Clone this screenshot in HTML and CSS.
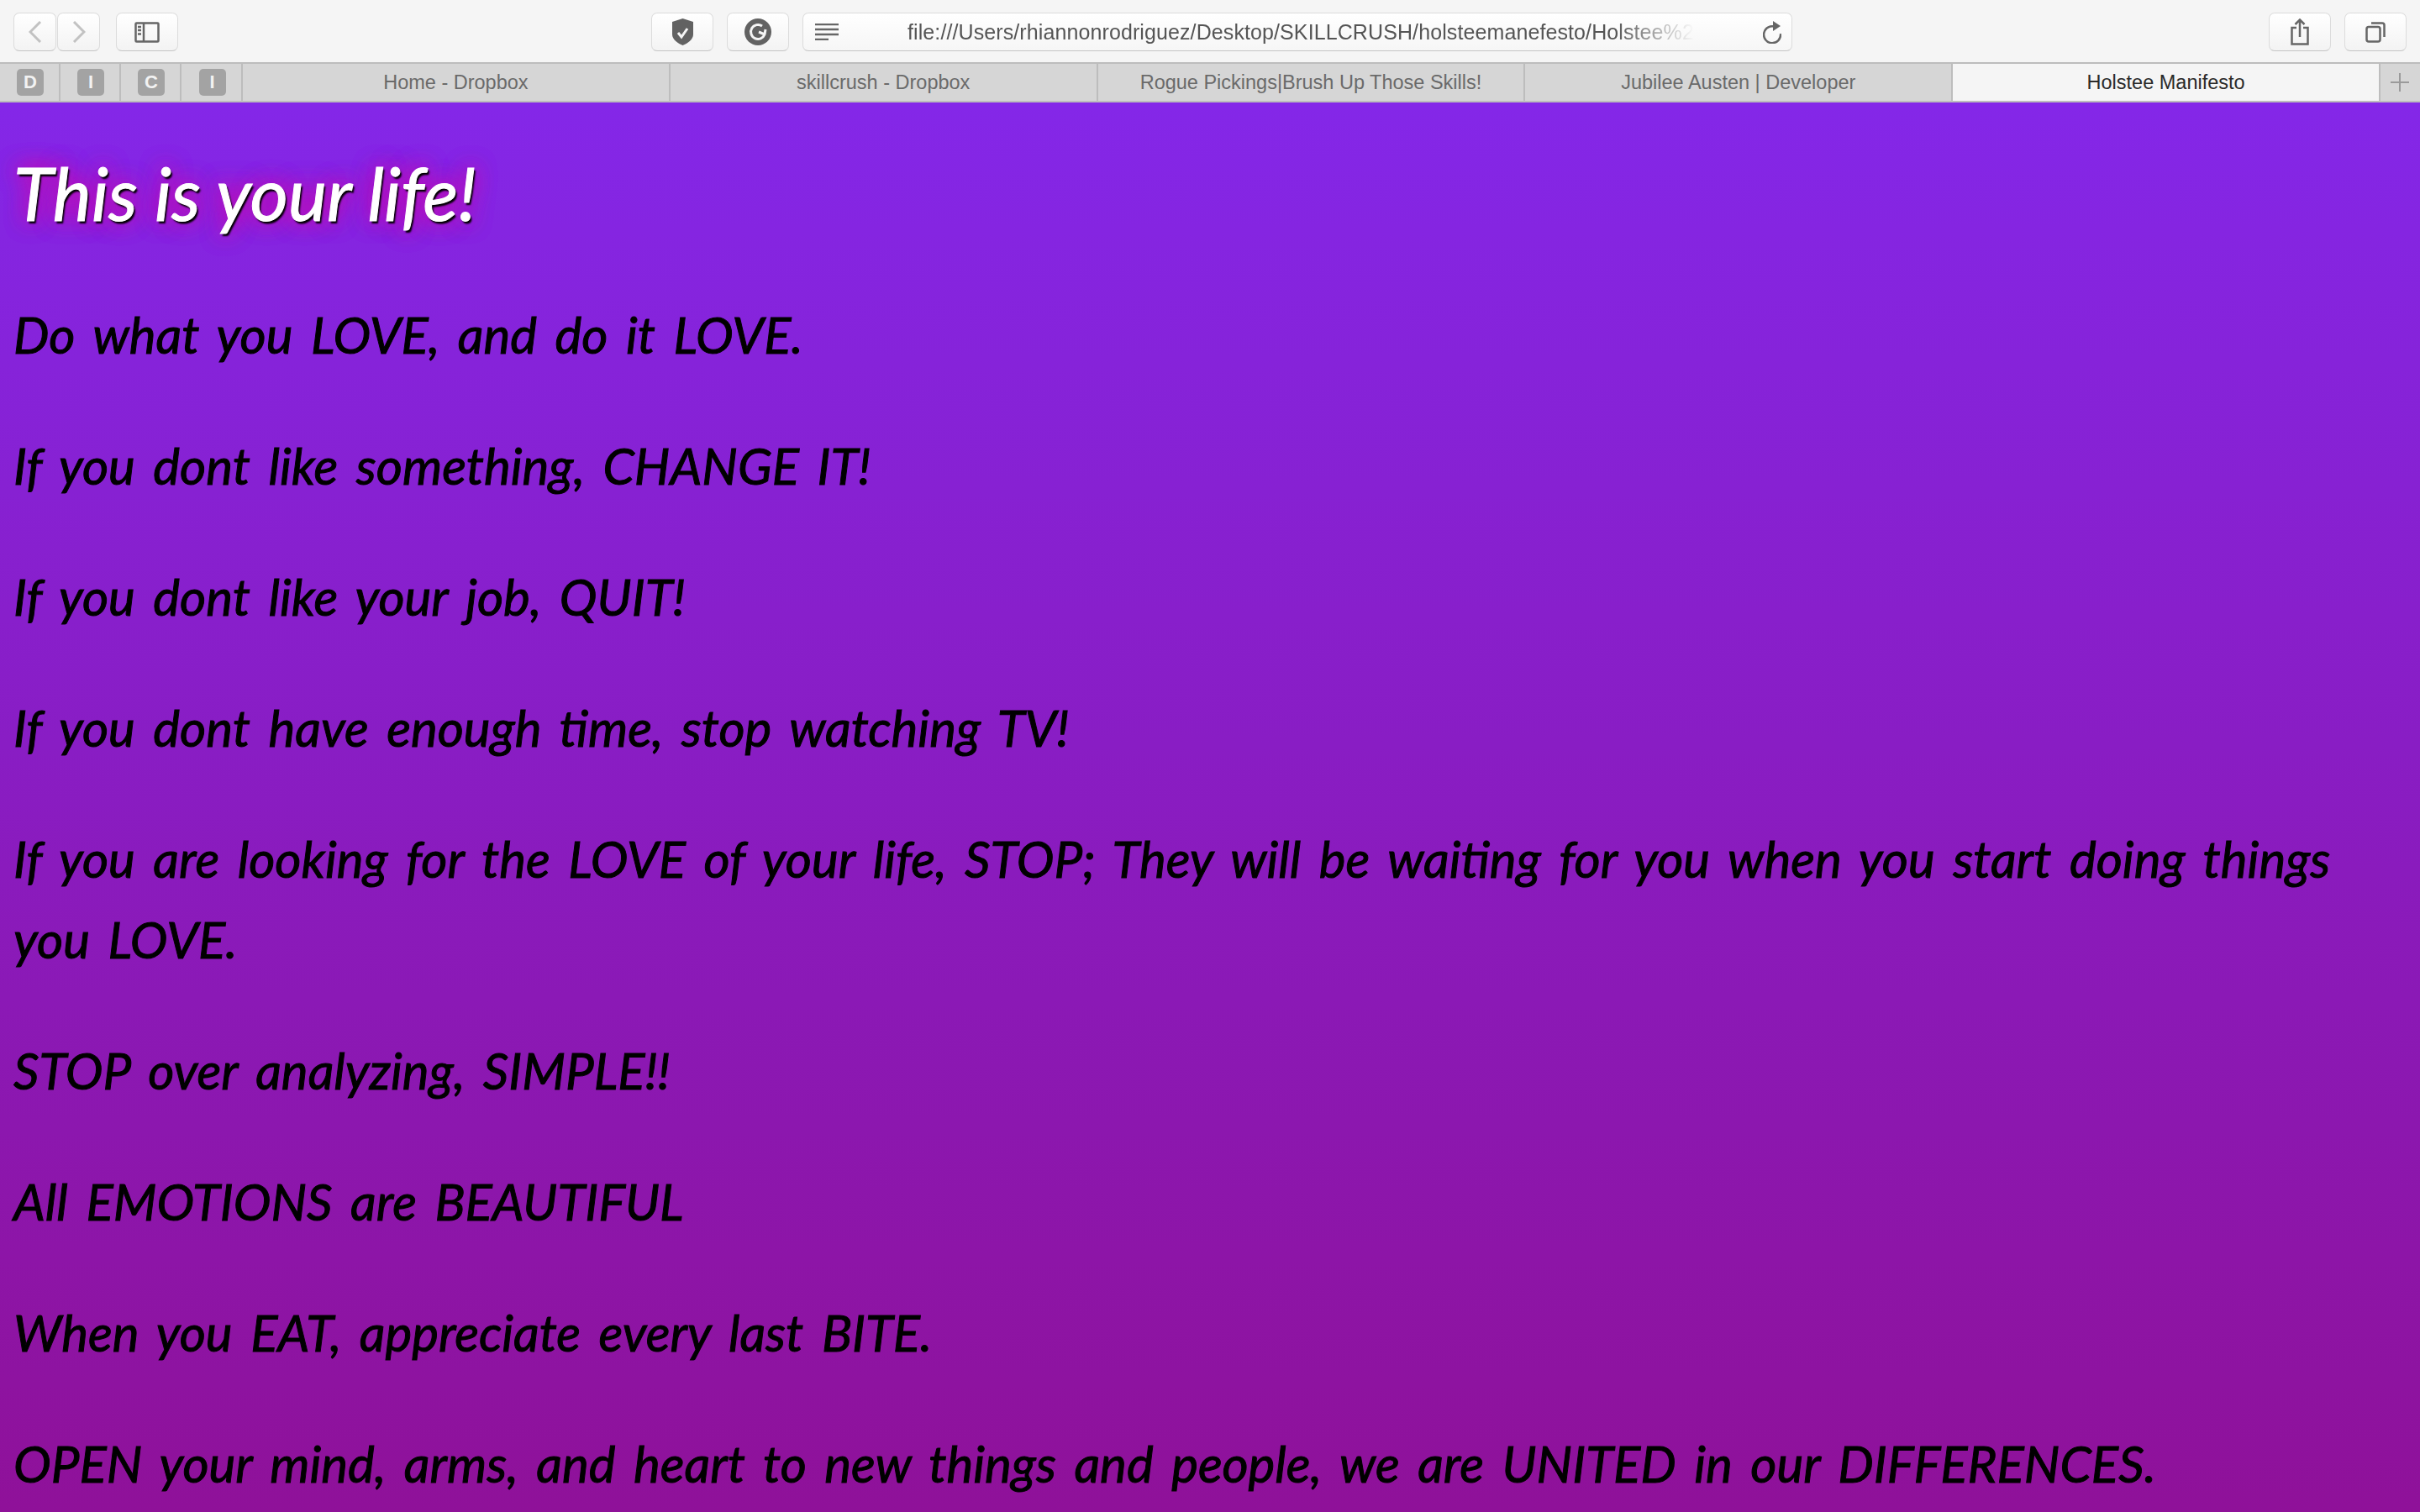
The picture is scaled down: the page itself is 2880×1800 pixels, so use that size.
FILE: index.html
```html
<!DOCTYPE html>
<html lang="en">
<head>
  <meta charset="UTF-8" />
  <title>Holstee Manifesto</title>
  <link rel="stylesheet" href="styles.css">
</head>
<body>

  <!-- Browser toolbar -->
  <header class="toolbar">
    <div class="nav-pair">
      <span class="tool-btn nav-btn"><svg width="16" height="26" viewBox="0 0 16 26"><path d="M14 1 L2 13 L14 25" class="icon-faint"/></svg></span>
      <span class="tool-btn nav-btn"><svg width="16" height="26" viewBox="0 0 16 26"><path d="M2 1 L14 13 L2 25" class="icon-faint"/></svg></span>
    </div>
    <span class="tool-btn wide-btn sidebar-btn"><svg width="30" height="25" viewBox="0 0 30 25"><rect x="1.5" y="1.5" width="27" height="22" rx="1" class="icon-line"/><path d="M11 1 V24" class="icon-line"/><path d="M4 6 H8 M4 10 H8 M4 14.5 H8" class="icon-line"/></svg></span>
    <div class="toolbar-center">
      <span class="tool-btn wide-btn"><svg width="27" height="32" viewBox="0 0 27 32"><path d="M13.5 0 L26 4 V19 C26 25 19 30 13.5 32 C8 30 1 25 1 19 V4 Z" class="icon-fill"/><path d="M8 17 L12 22 L19 12" class="icon-check"/></svg></span>
      <span class="tool-btn wide-btn"><svg width="32" height="32" viewBox="0 0 32 32"><circle cx="16" cy="16" r="16" class="icon-fill"/><path d="M21 9 A8.5 8.5 0 1 0 24 19 M24 19 L17 16 M24 19 L25 13" class="icon-check"/></svg></span>
      <div class="address-bar">
        <svg class="reader-icon" width="28" height="20" viewBox="0 0 28 20"><path d="M0 1 H28 M0 7 H28 M0 13 H28 M0 19 H16" class="icon-line"/></svg>
        <span class="url">file:///Users/rhiannonrodriguez/Desktop/SKILLCRUSH/holsteemanefesto/Holstee%2</span>
        <svg class="reload-icon" width="22" height="27" viewBox="0 0 22 27"><path d="M15 7 A10 10 0 1 0 21 15" class="icon-line"/><path d="M12 0 L21 6 L12 12 Z" class="icon-solid"/></svg>
      </div>
    </div>
    <div class="toolbar-right">
      <span class="tool-btn wide-btn"><svg width="22" height="32" viewBox="0 0 22 32"><path d="M7 11 H1.5 V30.5 H20.5 V11 H15" class="icon-line"/><path d="M11 22 V2 M5.5 7 L11 1.5 L16.5 7" class="icon-line"/></svg></span>
      <span class="tool-btn wide-btn"><svg width="24" height="25" viewBox="0 0 24 25"><rect x="1.5" y="6" width="16" height="17.5" rx="2.5" class="icon-line"/><path d="M7 1.5 H20 Q22.5 1.5 22.5 4 V18" class="icon-line"/></svg></span>
    </div>
  </header>

  <!-- Tab bar -->
  <nav class="tabbar">
    <div class="pin"><span class="pin-badge">D</span></div>
    <div class="pin"><span class="pin-badge">I</span></div>
    <div class="pin"><span class="pin-badge">C</span></div>
    <div class="pin pin-last"><span class="pin-badge">I</span></div>
    <div class="tab">Home - Dropbox</div>
    <div class="tab">skillcrush - Dropbox</div>
    <div class="tab">Rogue Pickings|Brush Up Those Skills!</div>
    <div class="tab">Jubilee Austen | Developer</div>
    <div class="tab tab-active">Holstee Manifesto</div>
    <div class="new-tab"><svg width="22" height="22" viewBox="0 0 22 22"><path d="M11 0 V22 M0 11 H22" class="icon-plus"/></svg></div>
  </nav>

  <!-- Page -->
  <main class="page">
    <h1>This is your life!</h1>
    <p>Do what you LOVE, and do it LOVE.</p>
    <p>If you dont like something, CHANGE IT!</p>
    <p>If you dont like your job, QUIT!</p>
    <p>If you dont have enough time, stop watching TV!</p>
    <p>If you are looking for the LOVE of your life, STOP; They will be waiting for you when you start doing things you LOVE.</p>
    <p>STOP over analyzing, SIMPLE!!</p>
    <p>All EMOTIONS are BEAUTIFUL</p>
    <p>When you EAT, appreciate every last BITE.</p>
    <p>OPEN your mind, arms, and heart to new things and people, we are UNITED in our DIFFERENCES.</p>
  </main>

</body>
</html>
```

FILE: styles.css
```css
html, body {
  margin: 0;
  height: 100%;
  overflow: hidden;
}
body {
  font-family: "Liberation Sans", Arial, sans-serif;
  display: flex;
  flex-direction: column;
  background: #8f1199;
}

/* toolbar */
.toolbar {
  height: 74px;
  background: #f5f5f5;
  display: flex;
  align-items: flex-start;
  padding: 15px 16px 0;
  box-sizing: border-box;
}
.nav-pair {
  display: flex;
  gap: 1px;
}
.sidebar-btn {
  margin-left: 19px;
}
.toolbar-center {
  display: flex;
  gap: 16px;
  margin-left: 563px;
}
.toolbar-right {
  display: flex;
  gap: 16px;
  margin-left: auto;
}
.tool-btn {
  display: flex;
  align-items: center;
  justify-content: center;
  height: 46px;
  box-sizing: border-box;
  border: 1px solid #dcdcdc;
  border-bottom-color: #c4c4c4;
  border-radius: 7px;
  background: linear-gradient(#ffffff, #f3f3f3);
}
.nav-btn {
  width: 51px;
}
.wide-btn {
  width: 74px;
}
.address-bar {
  width: 1178px;
  height: 46px;
  box-sizing: border-box;
  border: 1px solid #dcdcdc;
  border-bottom-color: #c4c4c4;
  border-radius: 7px;
  background: linear-gradient(#ffffff, #f6f6f6);
  display: flex;
  align-items: center;
  padding: 0 12px 0 14px;
}
.reader-icon {
  flex: none;
  margin-right: 82px;
}
.url {
  white-space: nowrap;
  font-size: 25px;
  letter-spacing: 0.1px;
  color: #555555;
  -webkit-mask-image: linear-gradient(to right, #000 90%, transparent 100%);
  mask-image: linear-gradient(to right, #000 90%, transparent 100%);
}
.reload-icon {
  flex: none;
  margin-left: auto;
}

/* icon strokes */
svg path, svg rect {
  fill: none;
}
.icon-faint {
  stroke: #c2c2c2;
  stroke-width: 3;
}
.icon-line {
  stroke: #666666;
  stroke-width: 2.5;
}
.icon-fill, svg path.icon-fill {
  fill: #626262;
}
.icon-check {
  stroke: #f5f5f5;
  stroke-width: 3;
}
svg path.icon-solid {
  fill: #666666;
}
.icon-plus {
  stroke: #9a9a9a;
  stroke-width: 2;
}

/* tabs */
.tabbar {
  height: 48px;
  box-sizing: border-box;
  border-top: 2px solid #bdbdbd;
  border-bottom: 2px solid #bdbdbd;
  background: #d6d6d6;
  display: flex;
}
.pin {
  width: 72px;
  flex: none;
  display: flex;
  align-items: center;
  justify-content: center;
  border-right: 2px solid #bdbdbd;
  padding-left: 2px;
  box-sizing: border-box;
}
.pin-last {
  width: 73px;
}
.pin-badge {
  width: 32px;
  height: 32px;
  border-radius: 5px;
  background: #a3a3a3;
  color: #f2f2f2;
  font-weight: bold;
  font-size: 22px;
  display: flex;
  align-items: center;
  justify-content: center;
}
.tab {
  width: 508.8px;
  flex: none;
  box-sizing: border-box;
  border-right: 2px solid #bdbdbd;
  display: flex;
  align-items: center;
  justify-content: center;
  font-size: 23.5px;
  color: #6a6a6a;
}
.tab-active {
  background: #f5f5f5;
  color: #2a2a2a;
}
.new-tab {
  flex: 1;
  display: flex;
  align-items: center;
  justify-content: center;
}

/* page content */
.page {
  flex: 1;
  padding: 50px 16px 0;
  background: linear-gradient(#8427e8, #8f1199 1678px);
  overflow: hidden;
}
h1 {
  margin: 0 0 62px;
  font-family: "Lato", sans-serif;
  font-weight: 400;
  font-style: italic;
  font-size: 87px;
  line-height: 116px;
  color: #ffffff;
  -webkit-text-stroke: 1px #ffffff;
  text-shadow: 2px 3px 2px #000000, 0 0 26px #b810bc, 0 0 26px #b810bc, 0 0 26px #b810bc;
}
p {
  margin: 0 0 60px;
  font-family: "Lato", sans-serif;
  font-style: italic;
  font-size: 60px;
  line-height: 96px;
  word-spacing: 7.5px;
  color: #000000;
  -webkit-text-stroke: 1px #000000;
}
```
